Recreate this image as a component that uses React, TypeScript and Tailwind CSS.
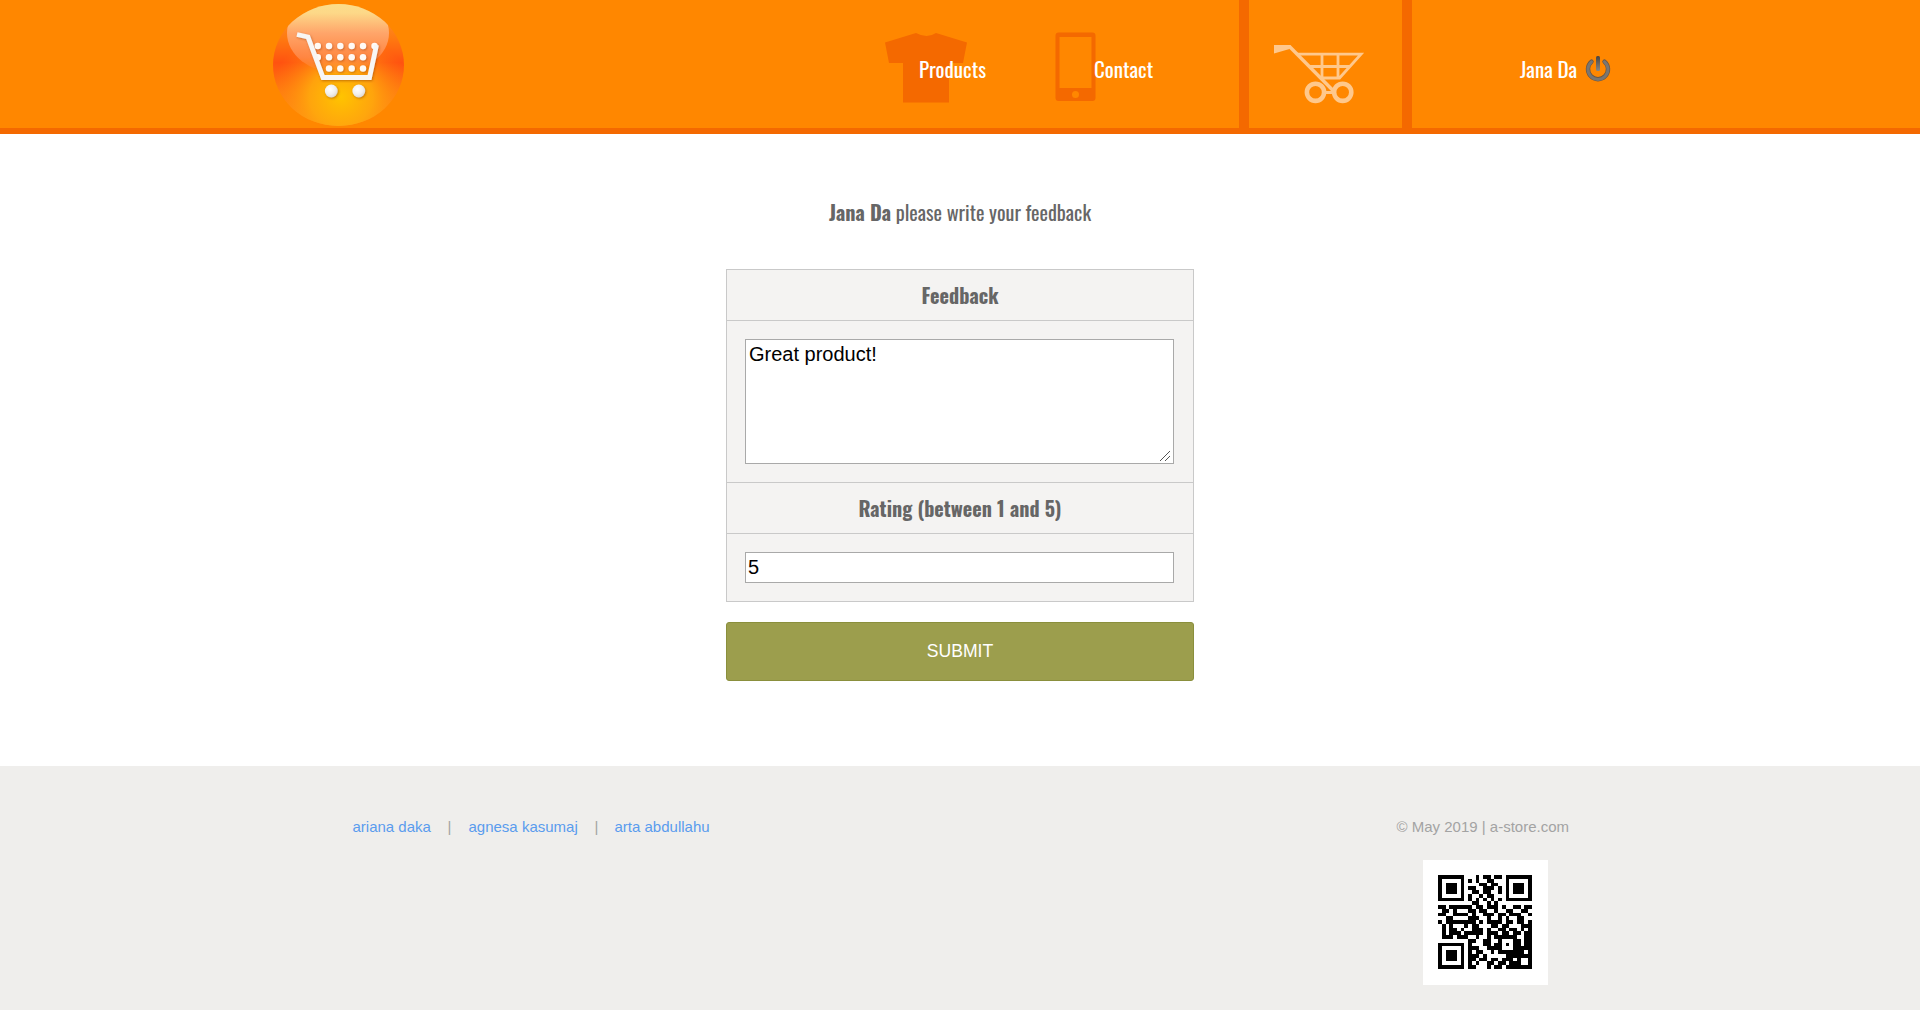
const QR_ROWS = [
  '1111111000101101101111111',
  '1000001010100110001000001',
  '1011101000011011001011101',
  '1011101011001110101011101',
  '1011101001101100101011101',
  '1000001010010110001000001',
  '1111111010101010101111111',
  '0000000001100101000000000',
  '1101111110110111010011011',
  '0110100011011001001100110',
  '1100111101001110110111001',
  '0011000011100100101001100',
  '1011111111010111101101101',
  '0101000101100011011000111',
  '0101101001110100110110101',
  '0101110111110111011011011',
  '0111011100100101111110011',
  '0000000011001100100011011',
  '1111111010001101101011011',
  '1000001011100111100011111',
  '1011101010110010111111101',
  '1011101011101000001111111',
  '1011101011011011011101001',
  '1000001010100110110111001',
  '1111111011000101101111111',
]

const LOGO_DOTS = [
  [317.8, 46], [329, 46], [340.3, 46], [351.7, 46], [363, 46], [374.5, 46],
  [317.8, 57.3], [329, 57.3], [340.3, 57.3], [351.7, 57.3], [363, 57.3],
  [329, 68.5], [340.3, 68.5], [351.7, 68.5], [363, 68.5],
]

function Logo() {
  return (
    <svg className="block h-[128px] w-[132px] shrink-0" viewBox="272 0 132 128">
      <defs>
        <linearGradient id="orb" x1="0" y1="0" x2="0" y2="1">
          <stop offset="0" stopColor="#ff9a30" />
          <stop offset="0.28" stopColor="#ff7a10" />
          <stop offset="0.48" stopColor="#ff5210" />
          <stop offset="0.72" stopColor="#ff7d10" />
          <stop offset="1" stopColor="#ff9a18" />
        </linearGradient>
        <radialGradient id="glow" cx="0.52" cy="0.76" r="0.54">
          <stop offset="0" stopColor="#ffc400" />
          <stop offset="0.45" stopColor="#ffa80c" stopOpacity="0.9" />
          <stop offset="1" stopColor="#ff7a10" stopOpacity="0" />
        </radialGradient>
        <linearGradient id="gloss" x1="0" y1="0" x2="0" y2="1">
          <stop offset="0" stopColor="#fae48a" />
          <stop offset="0.25" stopColor="#fdd888" />
          <stop offset="0.5" stopColor="#ffa56a" />
          <stop offset="0.8" stopColor="#ff8d50" stopOpacity="0.8" />
          <stop offset="1" stopColor="#ff8a30" stopOpacity="0.3" />
        </linearGradient>
        <radialGradient id="ball" cx="0.4" cy="0.35" r="0.7">
          <stop offset="0" stopColor="#ffffff" />
          <stop offset="0.6" stopColor="#f1efec" />
          <stop offset="1" stopColor="#dcd6ce" />
        </radialGradient>
        <filter id="cartShadow" x="-20%" y="-20%" width="140%" height="140%">
          <feDropShadow dx="0.8" dy="1" stdDeviation="0.9" floodColor="#8a3500" floodOpacity="0.5" />
        </filter>
        <clipPath id="orbClip">
          <ellipse cx="338.5" cy="65" rx="65.5" ry="61" />
        </clipPath>
      </defs>
      <ellipse cx="338.5" cy="65" rx="65.5" ry="61" fill="url(#orb)" />
      <ellipse cx="338.5" cy="65" rx="65.5" ry="61" fill="url(#glow)" />
      <ellipse cx="338" cy="33" rx="51" ry="40" fill="url(#gloss)" clipPath="url(#orbClip)" />
      <g filter="url(#cartShadow)">
        {LOGO_DOTS.map(([x, y]) => (
          <circle key={`${x}-${y}`} cx={x} cy={y} r="3.2" fill="#fffaf5" />
        ))}
        <path d="M297 34.500L308 37L323 77.500H369.500L376.500 45" fill="none" stroke="#f8f6f4" strokeWidth="4.800" />
        <circle cx="331.300" cy="91" r="6.400" fill="url(#ball)" />
        <circle cx="358.800" cy="91" r="6.400" fill="url(#ball)" />
      </g>
    </svg>
  )
}

function Trolley() {
  return (
    <svg className="block h-[60px] w-[92px]" viewBox="1273 44 92 60" fill="none" stroke="#ffc88c">
      <path d="M1274 45H1291L1289.500 49L1274 53.500Z" fill="#ffc88c" stroke="none" />
      <path d="M1289.500 46.500L1333.500 91" strokeWidth="3.400" />
      <path d="M1297 54.200H1361L1339.500 78H1322M1310 66.500H1350M1322 54V78M1338 54V78" strokeWidth="2.800" />
      <path d="M1323 92.500H1335" strokeWidth="3" />
      <circle cx="1315.500" cy="92.300" r="8.600" strokeWidth="4.600" />
      <circle cx="1342.700" cy="92.300" r="8.600" strokeWidth="4.600" />
    </svg>
  )
}

function PowerIcon() {
  return (
    <svg className="mt-[55px] block h-[28px] w-[28px]" viewBox="1584 55 28 28" fill="none" strokeLinecap="round">
      <defs>
        <linearGradient id="metal" x1="0" y1="0" x2="0" y2="1">
          <stop offset="0" stopColor="#4a4440" />
          <stop offset="1" stopColor="#8a8782" />
        </linearGradient>
      </defs>
      <path d="M1591.500 61.600A10 10 0 1 0 1604.500 61.600" stroke="#6b5744" strokeWidth="4.400" />
      <path d="M1591.500 61.800A10 10 0 1 0 1604.500 61.800" stroke="#7a7672" strokeWidth="3" />
      <rect x="1596" y="56" width="4" height="15" rx="1.500" fill="url(#metal)" />
    </svg>
  )
}

function QrCode() {
  return (
    <div className="mr-[63px] h-[125px] w-[125px] bg-white p-[15px]">
      <svg className="block h-[94px] w-[94px]" viewBox="0 0 25 25" shapeRendering="crispEdges">
        {QR_ROWS.map((row, y) =>
          row.split('').map((cell, x) =>
            cell === '1' ? <rect key={`${x}-${y}`} x={x} y={y} width="1" height="1" fill="#000" /> : null,
          ),
        )}
      </svg>
    </div>
  )
}

function ResizeGrip() {
  return (
    <svg className="pointer-events-none absolute right-[3px] bottom-[2px] h-[12px] w-[12px]" viewBox="0 0 12 12" stroke="#555" strokeWidth="1">
      <path d="M1 11L11 1M6 11L11 6" />
    </svg>
  )
}

export default function App() {
  return (
    <div className="flex h-[1010px] w-[1920px] flex-col overflow-hidden bg-white font-['Liberation_Sans',Arial,sans-serif]">
      <header className="flex h-[134px] shrink-0 border-b-[6px] border-[#f46900] bg-[#ff8700] pl-[272px] font-['Oswald',sans-serif] text-[21px] leading-[32px] font-[430] whitespace-nowrap text-white">
        <Logo />
        <nav className="ml-[481px] flex w-[354px] shrink-0">
          <a className="flex w-[169px]">
            <svg className="mt-[32px] h-[72px] w-[84px] shrink-0" viewBox="885 32 84 72">
              <path d="M885 42.500L916 33Q927 39 936 33L967 42.500L963 63H949V102.500H903V63H889Z" fill="#f46900" />
            </svg>
            <span className="relative mt-[53px] -ml-[50px]">Products</span>
          </a>
          <a className="flex">
            <svg className="mt-[32px] h-[70px] w-[43px] shrink-0" viewBox="0 0 43 70">
              <path fillRule="evenodd" d="M4.500 0.500H38.500Q41.500 0.500 41.500 3.500V66Q41.500 69 38.500 69H4.500Q1.500 69 1.500 66V3.500Q1.500 0.500 4.500 0.500ZM5.500 5V56H37.500V5ZM25 62.500A3.500 3.500 0 1 0 18 62.500A3.500 3.500 0 1 0 25 62.500Z" fill="#f46900" />
            </svg>
            <span className="relative mt-[53px] -ml-[3px]">Contact</span>
          </a>
        </nav>
        <a className="flex w-[173px] shrink-0 border-x-[10px] border-[#f46900] pt-[44px] pl-[24px]">
          <Trolley />
        </a>
        <div className="ml-[108px] flex">
          <span className="mt-[53px] w-[64px]">Jana Da</span>
          <PowerIcon />
        </div>
      </header>

      <main className="flex h-[632px] shrink-0 flex-col items-center pt-[62px] text-[#666]">
        <p className="font-['Oswald',sans-serif] text-[20.2px] leading-[32px]">
          <b>Jana Da</b> please write your feedback
        </p>
        <form className="mt-[41px] w-[468px]">
          <div className="h-[333px] border border-[#c9c9c9] bg-[#f4f3f2]">
            <div className="h-[51px] border-b border-[#c9c9c9] pt-[9px] text-center font-['Oswald',sans-serif] text-[20.2px] leading-[32px] font-bold">
              Feedback
            </div>
            <div className="h-[162px] border-b border-[#c9c9c9] px-[18px] pt-[18px]">
              <div className="relative h-[125px] w-[429px]">
                <textarea
                  className="block h-[125px] w-[429px] resize-none border border-[#a9a9a9] bg-white px-[3px] py-[3px] text-[20px] leading-[23px] text-black"
                  defaultValue="Great product!"
                />
                <ResizeGrip />
              </div>
            </div>
            <div className="h-[51px] border-b border-[#c9c9c9] pt-[9px] text-center font-['Oswald',sans-serif] text-[20.1px] leading-[32px] font-bold">
              Rating (between 1 and 5)
            </div>
            <div className="px-[18px] pt-[18px]">
              <input
                className="block h-[31px] w-[429px] border border-[#a9a9a9] bg-white px-[2px] text-[20px] leading-[23px] text-black"
                defaultValue="5"
              />
            </div>
          </div>
          <button type="button" className="mt-[20px] block h-[59px] w-[468px] rounded-[3px] border border-[#8a8f3c] bg-[#9c9e4d] text-[17.6px] text-white">
            SUBMIT
          </button>
        </form>
      </main>

      <footer className="flex h-[244px] shrink-0 justify-between bg-[#efeeec] pt-[51px] pr-[309px] pl-[352.5px] text-[15px] leading-[20px] text-[#a3a3a3]">
        <div className="flex h-[20px]">
          <a className="w-[95px] text-[#5a9cee]">ariana daka</a>
          <span className="w-[21px]">|</span>
          <a className="w-[126px] text-[#5a9cee]">agnesa kasumaj</a>
          <span className="w-[20px]">|</span>
          <a className="text-[#5a9cee]">arta abdullahu</a>
        </div>
        <div className="flex flex-col items-end gap-[23px]">
          <span className="mr-[42px] whitespace-nowrap">© May 2019 | a-store.com</span>
          <QrCode />
        </div>
      </footer>
    </div>
  )
}
